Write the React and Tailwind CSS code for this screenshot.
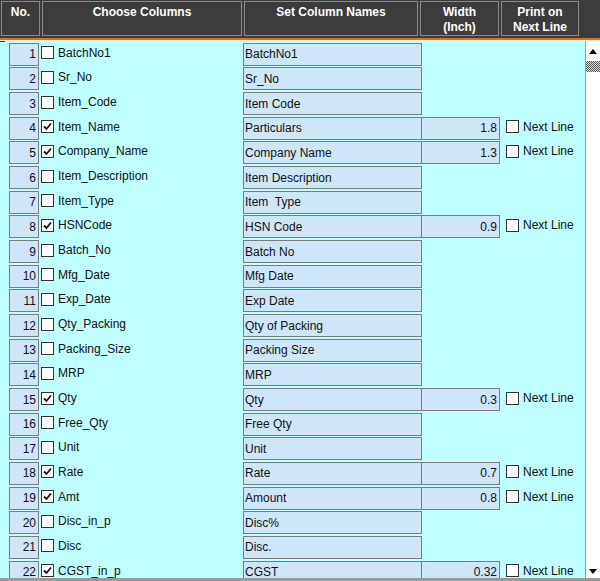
import React from 'react';

const filas = [
  [1, false, 'BatchNo1', 'BatchNo1'],
  [2, false, 'Sr_No', 'Sr_No'],
  [3, false, 'Item_Code', 'Item Code'],
  [4, true, 'Item_Name', 'Particulars', '1.8'],
  [5, true, 'Company_Name', 'Company Name', '1.3'],
  [6, false, 'Item_Description', 'Item Description'],
  [7, false, 'Item_Type', 'Item\u00a0 Type'],
  [8, true, 'HSNCode', 'HSN Code', '0.9'],
  [9, false, 'Batch_No', 'Batch No'],
  [10, false, 'Mfg_Date', 'Mfg Date'],
  [11, false, 'Exp_Date', 'Exp Date'],
  [12, false, 'Qty_Packing', 'Qty of Packing'],
  [13, false, 'Packing_Size', 'Packing Size'],
  [14, false, 'MRP', 'MRP'],
  [15, true, 'Qty', 'Qty', '0.3'],
  [16, false, 'Free_Qty', 'Free Qty'],
  [17, false, 'Unit', 'Unit'],
  [18, true, 'Rate', 'Rate', '0.7'],
  [19, true, 'Amt', 'Amount', '0.8'],
  [20, false, 'Disc_in_p', 'Disc%'],
  [21, false, 'Disc', 'Disc.'],
  [22, true, 'CGST_in_p', 'CGST', '0.32'],
];

function Casilla({ marcada }) {
  return (
    <span className="flex h-[13px] w-[13px] shrink-0 items-center justify-center border border-[#333333] bg-white">
      {marcada && (
        <svg width="9" height="9" viewBox="0 0 9 9">
          <path d="M1 4.5 L3.5 7 L8 1.5" fill="none" stroke="#111" strokeWidth="1.8" />
        </svg>
      )}
    </span>
  );
}

function Cabecera({ ancho, children }) {
  return (
    <div className={`${ancho} flex h-[35px] shrink-0 justify-center border border-[#8a8a8a] pt-[3px] text-center text-[12px] font-bold leading-[15px] text-white`}>
      {children}
    </div>
  );
}

export default function App() {
  return (
    <div className="flex h-[581px] w-[600px] flex-col overflow-hidden bg-[#3c3c3c]" style={{ fontFamily: '"Liberation Sans", Arial, sans-serif' }}>
      {/* cabecera */}
      <div className="flex h-[37px] shrink-0 gap-[2px] pt-[1px] pl-[1px]">
        <Cabecera ancho="w-[39px]">No.</Cabecera>
        <Cabecera ancho="w-[200px]">Choose Columns</Cabecera>
        <Cabecera ancho="w-[174px]">Set Column Names</Cabecera>
        <Cabecera ancho="w-[79px]">Width<br />(Inch)</Cabecera>
        <Cabecera ancho="w-[78px]">Print on<br />Next Line</Cabecera>
      </div>
      <div className="mt-[1px] h-[2px] shrink-0 bg-[#e07010]" />
      <div className="h-[1px] shrink-0 bg-[#f0f0f0]" />

      {/* cuerpo */}
      <div className="flex min-h-0 flex-1 border-b-[3px] border-[#9a9a9a] bg-[#bfffff]">
        <div className="relative min-w-0 flex-1 overflow-hidden pt-[1px]">
          <div className="absolute left-0 top-0 h-[1px] w-[5px] bg-[#7a1a00]" />
          {filas.map(([n, marcada, col, nombre, ancho]) => (
            <div key={n} className="flex h-[24.67px] items-center text-[12px] text-[#111]">
              <div className="flex w-[41px] shrink-0 justify-end pr-[2px]">
                <div className="flex h-[23px] w-[30px] items-center justify-end border border-[#7c7c7c] bg-[#d0e6f8] pr-[2px]">{n}</div>
              </div>
              <div className="flex w-[202px] shrink-0 items-center gap-[4px] pb-[3px]">
                <Casilla marcada={marcada} />
                <span>{col}</span>
              </div>
              <div className="flex h-[23px] w-[179px] shrink-0 items-center border border-[#7c7c7c] bg-[#cfe6f8] pl-[1px]">{nombre}</div>
              {ancho && (
                <>
                  <div className="-ml-[1px] flex h-[23px] w-[79px] shrink-0 items-center justify-end border border-[#7c7c7c] bg-[#cfe6f8] pr-[2px]">{ancho}</div>
                  <div className="ml-[6px] flex items-center gap-[4px] pb-[3px]">
                    <Casilla marcada={false} />
                    <span>Next Line</span>
                  </div>
                </>
              )}
            </div>
          ))}
        </div>
        {/* barra de desplazamiento */}
        <div className="flex w-[15px] shrink-0 flex-col border-l border-[#a0a0a0] bg-white pt-[3px]">
          <div className="flex h-[15px] items-center justify-center">
            <svg width="8" height="5" viewBox="0 0 8 5"><path d="M0 5 L4 0 L8 5 Z" fill="#000" /></svg>
          </div>
          <div className="mt-[2px] h-[11px] bg-[repeating-conic-gradient(#555_0_25%,#ddd_0_50%)] bg-[length:2px_2px]" />
          <div className="flex-1" />
          <div className="flex h-[14px] items-center justify-center">
            <svg width="8" height="5" viewBox="0 0 8 5"><path d="M0 0 L8 0 L4 5 Z" fill="#000" /></svg>
          </div>
        </div>
      </div>
    </div>
  );
}
